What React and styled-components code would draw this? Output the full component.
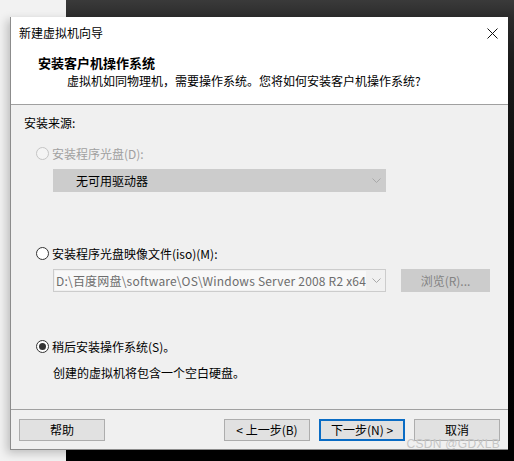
import React from "react";
import styled, { createGlobalStyle } from "styled-components";

const Global = createGlobalStyle`
  html, body { margin: 0; padding: 0; }
  body {
    width: 514px;
    height: 461px;
    overflow: hidden;
    font-family: "Noto Sans CJK SC", "Microsoft YaHei UI", sans-serif;
    font-size: 12px;
    color: #000;
    background:
      linear-gradient(to right, #f2f2f2 0 66px, transparent 66px),
      linear-gradient(to bottom, #3a3a3a 0, #2c2c2c 17px, #1c1c1c 60px, #060606 220px, #000 100%);
  }
`;

const Screen = styled.div`
  padding: 17px 6px 0 10px;
`;

const Dialog = styled.div`
  position: relative;
  width: 498px;
  height: 433px;
  box-sizing: border-box;
  border-left: 1px solid #8c8c8c;
  border-bottom: 1px solid #8c8c8c;
  display: flex;
  flex-direction: column;
  overflow: hidden;
  box-shadow: -3px 3px 9px rgba(0, 0, 0, 0.22);
`;

const TitleBar = styled.div`
  height: 32px;
  flex: none;
  background: #fff;
  display: flex;
  align-items: center;
  justify-content: space-between;
  padding: 0 10px 0 8px;
  line-height: 18px;
`;

const CloseIcon = styled.svg`
  width: 11px;
  height: 11px;
  display: block;
`;

const Header = styled.div`
  flex: none;
  background: #fff;
  padding: 5px 0 14px 27px;
  border-bottom: 1px solid #a0a0a0;
`;

const HeaderTitle = styled.div`
  font-size: 13px;
  font-weight: 700;
  line-height: 18px;
`;

const HeaderSub = styled.div`
  line-height: 18px;
  padding-left: 29px;
`;

const Body = styled.div`
  flex: 1;
  background: #f0f0f0;
  padding: 9px 13px 0 13px;
  display: flex;
  flex-direction: column;
`;

const Label = styled.div`
  line-height: 18px;
`;

const Group = styled.div`
  margin-top: ${(p) => p.$top}px;
  display: flex;
  flex-direction: column;
`;

const RadioRow = styled.div`
  display: flex;
  align-items: center;
  height: 18px;
  padding-left: 12px;
  gap: 3px;
  color: ${(p) => (p.$disabled ? "#a0a0a0" : "#000")};
`;

const Radio = styled.span`
  width: 13px;
  height: 13px;
  box-sizing: border-box;
  border-radius: 50%;
  border: 1px solid ${(p) => (p.$disabled ? "#c4c4c4" : "#333")};
  background: ${(p) => (p.$disabled ? "#f4f4f4" : "#fff")};
  display: flex;
  align-items: center;
  justify-content: center;
  flex: none;
  &::after {
    content: "";
    width: 7px;
    height: 7px;
    border-radius: 50%;
    background: #333;
    display: ${(p) => (p.$checked ? "block" : "none")};
  }
`;

const FieldRow = styled.div`
  display: flex;
  align-items: center;
  gap: 15px;
  margin-top: 7px;
  padding-left: 29px;
`;

const Combo = styled.div`
  width: 333px;
  height: ${(p) => p.$h}px;
  box-sizing: border-box;
  border: 1px solid #cccccc;
  background: ${(p) => (p.$solid ? "#cccccc" : "#f0f0f0")};
  display: flex;
  align-items: center;
  position: relative;
`;

const ComboText = styled.div`
  flex: 1;
  align-self: stretch;
  display: flex;
  align-items: center;
  overflow: hidden;
  white-space: nowrap;
  line-height: 18px;
  padding-left: ${(p) => p.$pad}px;
  letter-spacing: ${(p) => (p.$muted ? "0.2px" : "0")};
  color: ${(p) => (p.$muted ? "#6d6d6d" : "#000")};
  background: ${(p) => (p.$muted ? "#f8f8f8" : "transparent")};
  margin: ${(p) => (p.$muted ? "1px 0 1px 1px" : "0")};
`;

const Chevron = styled.svg`
  width: 9px;
  height: 5px;
  flex: none;
  margin: 0 4px 0 6px;
  display: block;
`;

const BrowseButton = styled.div`
  width: 89px;
  height: 23px;
  box-sizing: border-box;
  background: #cccccc;
  border: 1px solid #cccccc;
  color: #838383;
  display: flex;
  align-items: center;
  justify-content: center;
  line-height: 18px;
`;

const Desc = styled.div`
  line-height: 18px;
  margin-top: 9px;
  padding-left: 29px;
`;

const Footer = styled.div`
  flex: none;
  border-top: 1px solid #a0a0a0;
  background: #f0f0f0;
  padding: 9px 8px 8px 8px;
  display: flex;
  gap: 9px;
`;

const Spacer = styled.div`
  flex: 1;
`;

const Button = styled.div`
  width: 86px;
  height: 22px;
  box-sizing: border-box;
  background: #e1e1e1;
  border: ${(p) => (p.$primary ? "2px solid #0a6cc4" : "1px solid #adadad")};
  display: flex;
  align-items: center;
  justify-content: center;
  line-height: 18px;
`;

const Watermark = styled.div`
  position: absolute;
  right: 8px;
  bottom: -1px;
  font-family: "Liberation Sans", Arial, sans-serif;
  font-size: 12px;
  line-height: 11px;
  color: #c6c6c6;
  letter-spacing: 0.3px;
`;

function ChevronIcon() {
  return (
    <Chevron viewBox="0 0 9 5">
      <polyline points="0.5,0.5 4.5,4.5 8.5,0.5" fill="none" stroke="#a8a8a8" strokeWidth="1" />
    </Chevron>
  );
}

export default function App() {
  return (
    <>
      <Global />
      <Screen>
        <Dialog>
          <TitleBar>
            <span>新建虚拟机向导</span>
            <CloseIcon viewBox="0 0 11 11">
              <path d="M0.5 0.5 L10.5 10.5 M10.5 0.5 L0.5 10.5" stroke="#111" strokeWidth="1" fill="none" />
            </CloseIcon>
          </TitleBar>
          <Header>
            <HeaderTitle>安装客户机操作系统</HeaderTitle>
            <HeaderSub>虚拟机如同物理机，需要操作系统。您将如何安装客户机操作系统?</HeaderSub>
          </Header>
          <Body>
            <Label>安装来源:</Label>
            <Group $top={12}>
              <RadioRow $disabled>
                <Radio $disabled />
                <span>安装程序光盘(D):</span>
              </RadioRow>
              <FieldRow>
                <Combo $h={23} $solid>
                  <ComboText $pad={22}>无可用驱动器</ComboText>
                  <ChevronIcon />
                </Combo>
              </FieldRow>
            </Group>
            <Group $top={52}>
              <RadioRow>
                <Radio />
                <span>安装程序光盘映像文件(iso)(M):</span>
              </RadioRow>
              <FieldRow>
                <Combo $h={23}>
                  <ComboText $pad={1} $muted>D:\百度网盘\software\OS\Windows Server 2008 R2 x64</ComboText>
                  <ChevronIcon />
                </Combo>
                <BrowseButton>浏览(R)...</BrowseButton>
              </FieldRow>
            </Group>
            <Group $top={45}>
              <RadioRow>
                <Radio $checked />
                <span>稍后安装操作系统(S)。</span>
              </RadioRow>
              <Desc>创建的虚拟机将包含一个空白硬盘。</Desc>
            </Group>
          </Body>
          <Footer>
            <Button>帮助</Button>
            <Spacer />
            <Button>&lt; 上一步(B)</Button>
            <Button $primary>下一步(N) &gt;</Button>
            <Button>取消</Button>
          </Footer>
          <Watermark>CSDN @GDXLB</Watermark>
        </Dialog>
      </Screen>
    </>
  );
}
